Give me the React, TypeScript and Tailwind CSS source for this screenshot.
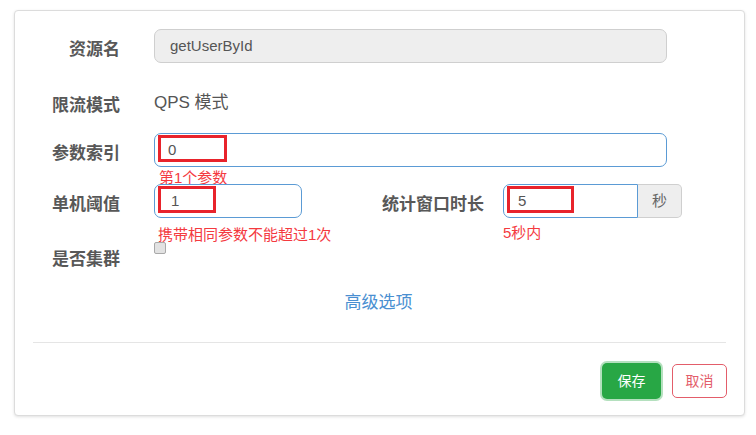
const font = { fontFamily: '"Liberation Sans", "Noto Sans CJK SC", sans-serif' };

const Label = ({ children }: { children: string }) => (
  <div className="w-[105px] h-[34px] pt-[7px] flex items-center justify-end text-[17px] font-bold text-[#585858] shrink-0">
    {children}
  </div>
);

const Marker = ({ width }: { width: string }) => (
  <div className={`absolute left-[3px] top-[1px] bottom-[4px] border-[3px] border-[#e8232b] ${width}`} />
);

export default function App() {
  return (
    <div className="bg-white w-[756px] h-[435px] pt-[10px] pl-[14px]" style={font}>
      <div className="w-[731px] h-[406px] border border-[#dcdcdc] rounded-[4px] shadow-[0_1px_3px_rgba(0,0,0,0.12)] bg-white pt-[18px]">
        <div className="flex items-start">
          <Label>资源名</Label>
          <div className="ml-[34px] w-[513px] h-[34px] rounded-[7px] border border-[#cfcfcf] bg-[#eeeeee] flex items-center pl-[15px] text-[15px] text-[#555]">
            getUserById
          </div>
        </div>

        <div className="flex items-start mt-[22px]">
          <Label>限流模式</Label>
          <div className="ml-[34px] h-[34px] pt-[2px] flex items-center text-[17px] text-[#555]">QPS 模式</div>
        </div>

        <div className="flex items-start mt-[14px]">
          <Label>参数索引</Label>
          <div className="relative ml-[34px] w-[513px] h-[34px] rounded-[7px] border border-[#5b9bd5] flex items-center pl-[13px] text-[15px] text-[#555]">
            <Marker width="w-[69px]" />
            <span className="relative">0</span>
            <div className="absolute left-[4px] top-full mt-[3px] text-[15px] leading-[18px] text-[#f43a3f] whitespace-nowrap">
              第1个参数
            </div>
          </div>
        </div>

        <div className="flex items-start mt-[17px]">
          <Label>单机阈值</Label>
          <div className="relative ml-[34px] w-[148px] h-[34px] rounded-[7px] border border-[#5b9bd5] flex items-center pl-[16px] text-[15px] text-[#555]">
            <Marker width="w-[58px]" />
            <span className="relative">1</span>
            <div className="absolute left-[3px] top-full mt-[9px] text-[15px] leading-[18px] text-[#f43a3f] whitespace-nowrap">
              携带相同参数不能超过1次
            </div>
          </div>
          <div className="ml-[80px] h-[34px] pt-[7px] flex items-center text-[17px] font-bold text-[#585858]">统计窗口时长</div>
          <div className="relative ml-[19px] flex">
            <div className="relative w-[135px] h-[34px] rounded-l-[7px] border border-[#5b9bd5] flex items-center pl-[14px] text-[15px] text-[#555]">
              <Marker width="w-[67px]" />
              <span className="relative">5</span>
            </div>
            <div className="w-[44px] h-[34px] rounded-r-[5px] border border-l-0 border-[#cfcfcf] bg-[#eeeeee] flex items-center justify-center text-[15px] text-[#666]">
              秒
            </div>
            <div className="absolute left-0 top-full mt-[6px] text-[15px] leading-[18px] text-[#f43a3f] whitespace-nowrap">
              5秒内
            </div>
          </div>
        </div>

        <div className="flex items-start mt-[24px]">
          <div className="w-[105px] flex justify-end pt-[6px] text-[17px] leading-[24px] font-bold text-[#585858] shrink-0">
            是否集群
          </div>
          <div className="ml-[34px] w-[12px] h-[12px] rounded-[2px] border border-[#a9a9a9] bg-[#e2e2e2]" />
        </div>

        <div className="flex justify-center mt-[18px] pr-[2px]">
          <span className="text-[17px] leading-[24px] pt-[1px] text-[#4a8fd1]">高级选项</span>
        </div>

        <div className="mx-[18px] mt-[27px] border-t border-[#e5e5e5]" />

        <div className="flex justify-end items-center gap-[11px] mr-[17px] mt-[20px]">
          <button className="w-[59px] h-[36px] rounded-[5px] bg-[#28a745] text-white text-[14px] shadow-[0_0_0_2px_rgba(40,167,69,0.35)]">
            保存
          </button>
          <button className="w-[55px] h-[34px] rounded-[5px] border border-[#e35d6a] bg-white text-[#e35d6a] text-[14px]">
            取消
          </button>
        </div>
      </div>
    </div>
  );
}
